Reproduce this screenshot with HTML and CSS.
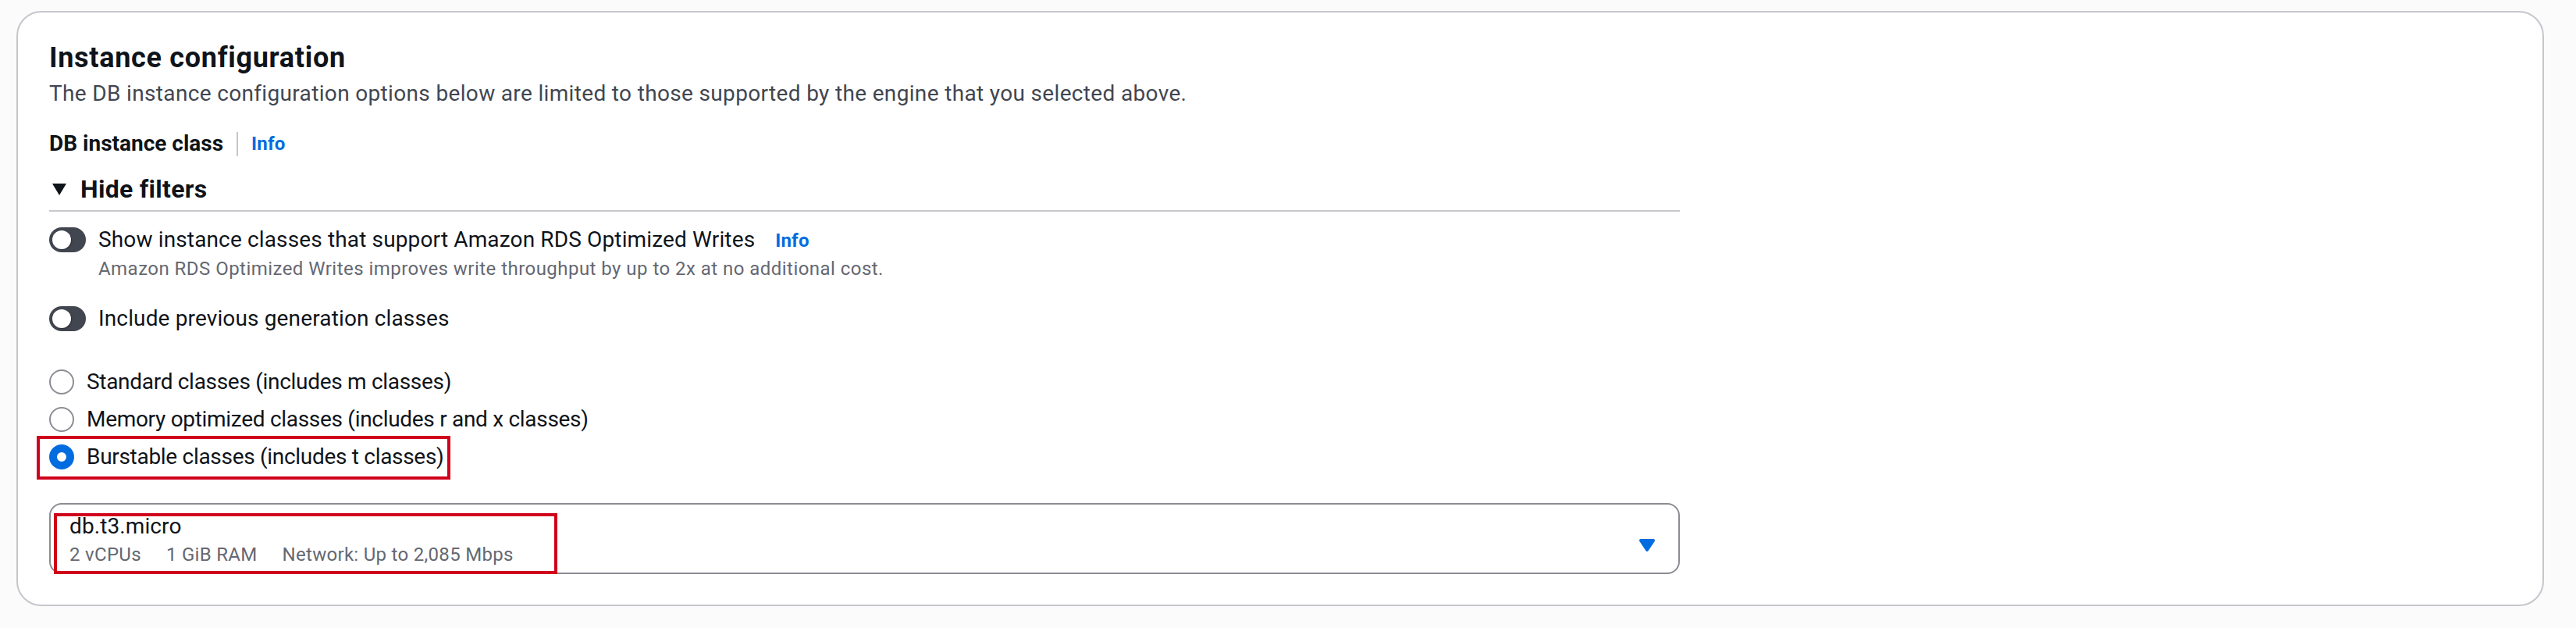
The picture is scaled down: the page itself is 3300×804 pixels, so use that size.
FILE: index.html
```html
<!DOCTYPE html>
<html lang="en">
<head>
<meta charset="utf-8">
<title>Instance configuration</title>
<link rel="stylesheet" href="styles.css">
</head>
<body>
<main class="page">
  <section class="card">
    <h2 class="title">Instance configuration</h2>
    <p class="desc">The DB instance configuration options below are limited to those supported by the engine that you selected above.</p>

    <div class="label-row">
      <span class="label">DB instance class</span>
      <span class="sep"></span>
      <a class="info">Info</a>
    </div>

    <div class="filters">
      <div class="exp-header">
        <svg class="exp-caret" viewBox="0 0 18 15" width="18" height="15"><path d="M0 0H18L9 15Z" fill="#0f141a"/></svg>
        <span>Hide filters</span>
      </div>

      <div class="toggle-row first">
        <span class="toggle"><span class="knob"></span></span>
        <div class="toggle-text">
          <div class="toggle-label">Show instance classes that support Amazon RDS Optimized Writes<a class="info inline">Info</a></div>
          <div class="toggle-desc">Amazon RDS Optimized Writes improves write throughput by up to 2x at no additional cost.</div>
        </div>
      </div>

      <div class="toggle-row second">
        <span class="toggle"><span class="knob"></span></span>
        <div class="toggle-text">
          <div class="toggle-label">Include previous generation classes</div>
        </div>
      </div>

      <div class="radios">
        <div class="radio-item"><span class="radio"></span><span class="radio-label">Standard classes (includes m classes)</span></div>
        <div class="radio-item"><span class="radio"></span><span class="radio-label">Memory optimized classes (includes r and x classes)</span></div>
        <div class="radio-item selected"><span class="radio"></span><span class="radio-label">Burstable classes (includes t classes)</span><span class="mark mark-radio"></span></div>
      </div>
    </div>

    <div class="select">
      <div class="select-value">
        <div class="select-title">db.t3.micro</div>
        <div class="select-tags"><span>2 vCPUs</span><span>1 GiB RAM</span><span>Network: Up to 2,085 Mbps</span></div>
      </div>
      <svg class="select-caret" viewBox="0 0 16 16" width="32" height="32"><path d="M4 5h8l-4 6-4-6z" fill="#006ce0" stroke="#006ce0" stroke-width="2" stroke-linejoin="round"/></svg>
      <span class="mark mark-select"></span>
    </div>
  </section>
</main>
</body>
</html>
```

FILE: styles.css
```css
* { box-sizing: border-box; }
html, body { margin: 0; padding: 0; }
body {
  background: #fbfbfb;
  font-family: Roboto, "Liberation Sans", sans-serif;
  color: #0f141a;
}
.page {
  padding: 14px 41px 0 21px;
}
.card {
  background: #ffffff;
  border: 2px solid #c6c6cd;
  border-radius: 32px;
  padding: 36px 40px 40px 40px;
  height: 762px;
}
.title {
  margin: 0;
  font-size: 36px;
  line-height: 44px;
  font-weight: 700;
  letter-spacing: 0.7px;
  color: #0f141a;
}
.desc {
  margin: 4px 0 0 0;
  font-size: 28px;
  line-height: 40px;
  letter-spacing: 0.34px;
  color: #424650;
}
.label-row {
  margin-top: 24px;
  display: flex;
  align-items: center;
  height: 40px;
}
.label {
  font-size: 28px;
  line-height: 40px;
  font-weight: 700;
}
.sep {
  width: 2px;
  height: 31px;
  background: #c6c6cd;
  margin: 0 17px;
}
.info {
  font-size: 24px;
  font-weight: 700;
  color: #006ce0;
  line-height: 40px;
  letter-spacing: 0.2px;
}
.filters {
  width: 2089px;
}
.exp-header {
  margin-top: 18px;
  display: flex;
  align-items: center;
  font-size: 32px;
  line-height: 40px;
  font-weight: 700;
  letter-spacing: 0.3px;
  padding-bottom: 7px;
  border-bottom: 2px solid #c6c6cd;
  height: 49px;
}
.exp-caret {
  margin-left: 4px;
  margin-right: 18px;
}
.toggle-row {
  display: flex;
  align-items: flex-start;
}
.toggle-row.first { margin-top: 16px; }
.toggle-row.second { margin-top: 28px; }
.toggle {
  position: relative;
  width: 47px;
  height: 32px;
  margin-top: 4px;
  border-radius: 16px;
  background: #424650;
  flex: none;
}
.knob {
  position: absolute;
  left: 4px;
  top: 4px;
  width: 24px;
  height: 24px;
  border-radius: 50%;
  background: #ffffff;
  box-shadow: 1px 1px 2px rgba(0, 0, 0, 0.35);
}
.toggle-text {
  margin-left: 16px;
}
.toggle-label {
  font-size: 28px;
  line-height: 40px;
  letter-spacing: 0.14px;
  color: #0f141a;
}
.info.inline {
  margin-left: 26px;
}
.toggle-desc {
  font-size: 24px;
  line-height: 32px;
  letter-spacing: 0.46px;
  color: #656871;
}
.radios {
  margin-top: 41px;
  display: flex;
  flex-direction: column;
  gap: 8px;
}
.radio-item {
  position: relative;
  display: flex;
  align-items: flex-start;
  height: 40px;
}
.radio {
  width: 32px;
  height: 32px;
  margin-top: 4px;
  border-radius: 50%;
  border: 2px solid #8c8c94;
  background: #ffffff;
  flex: none;
}
.radio-item.selected .radio {
  border: 10px solid #006ce0;
}
.radio-label {
  margin-left: 16px;
  font-size: 28px;
  line-height: 40px;
  letter-spacing: -0.3px;
}
.mark {
  position: absolute;
  border: 4px solid #d0021b;
  pointer-events: none;
}
.mark-radio {
  left: -16px;
  top: -7px;
  width: 530px;
  height: 56px;
}
.select {
  position: relative;
  margin-top: 39px;
  width: 2089px;
  height: 91px;
  border: 2px solid #8c8c94;
  border-radius: 16px;
  padding: 8px 24px 0 24px;
  display: flex;
  align-items: flex-start;
  justify-content: space-between;
}
.select-title {
  font-size: 28px;
  line-height: 40px;
  letter-spacing: 0.1px;
  color: #0f141a;
}
.select-tags {
  display: flex;
  gap: 32px;
  font-size: 24px;
  line-height: 32px;
  letter-spacing: 0.3px;
  color: #656871;
}
.select-caret {
  margin-top: 28px;
  margin-right: 0;
}
.mark-select {
  left: 4px;
  top: 11px;
  width: 645px;
  height: 78px;
}
```
